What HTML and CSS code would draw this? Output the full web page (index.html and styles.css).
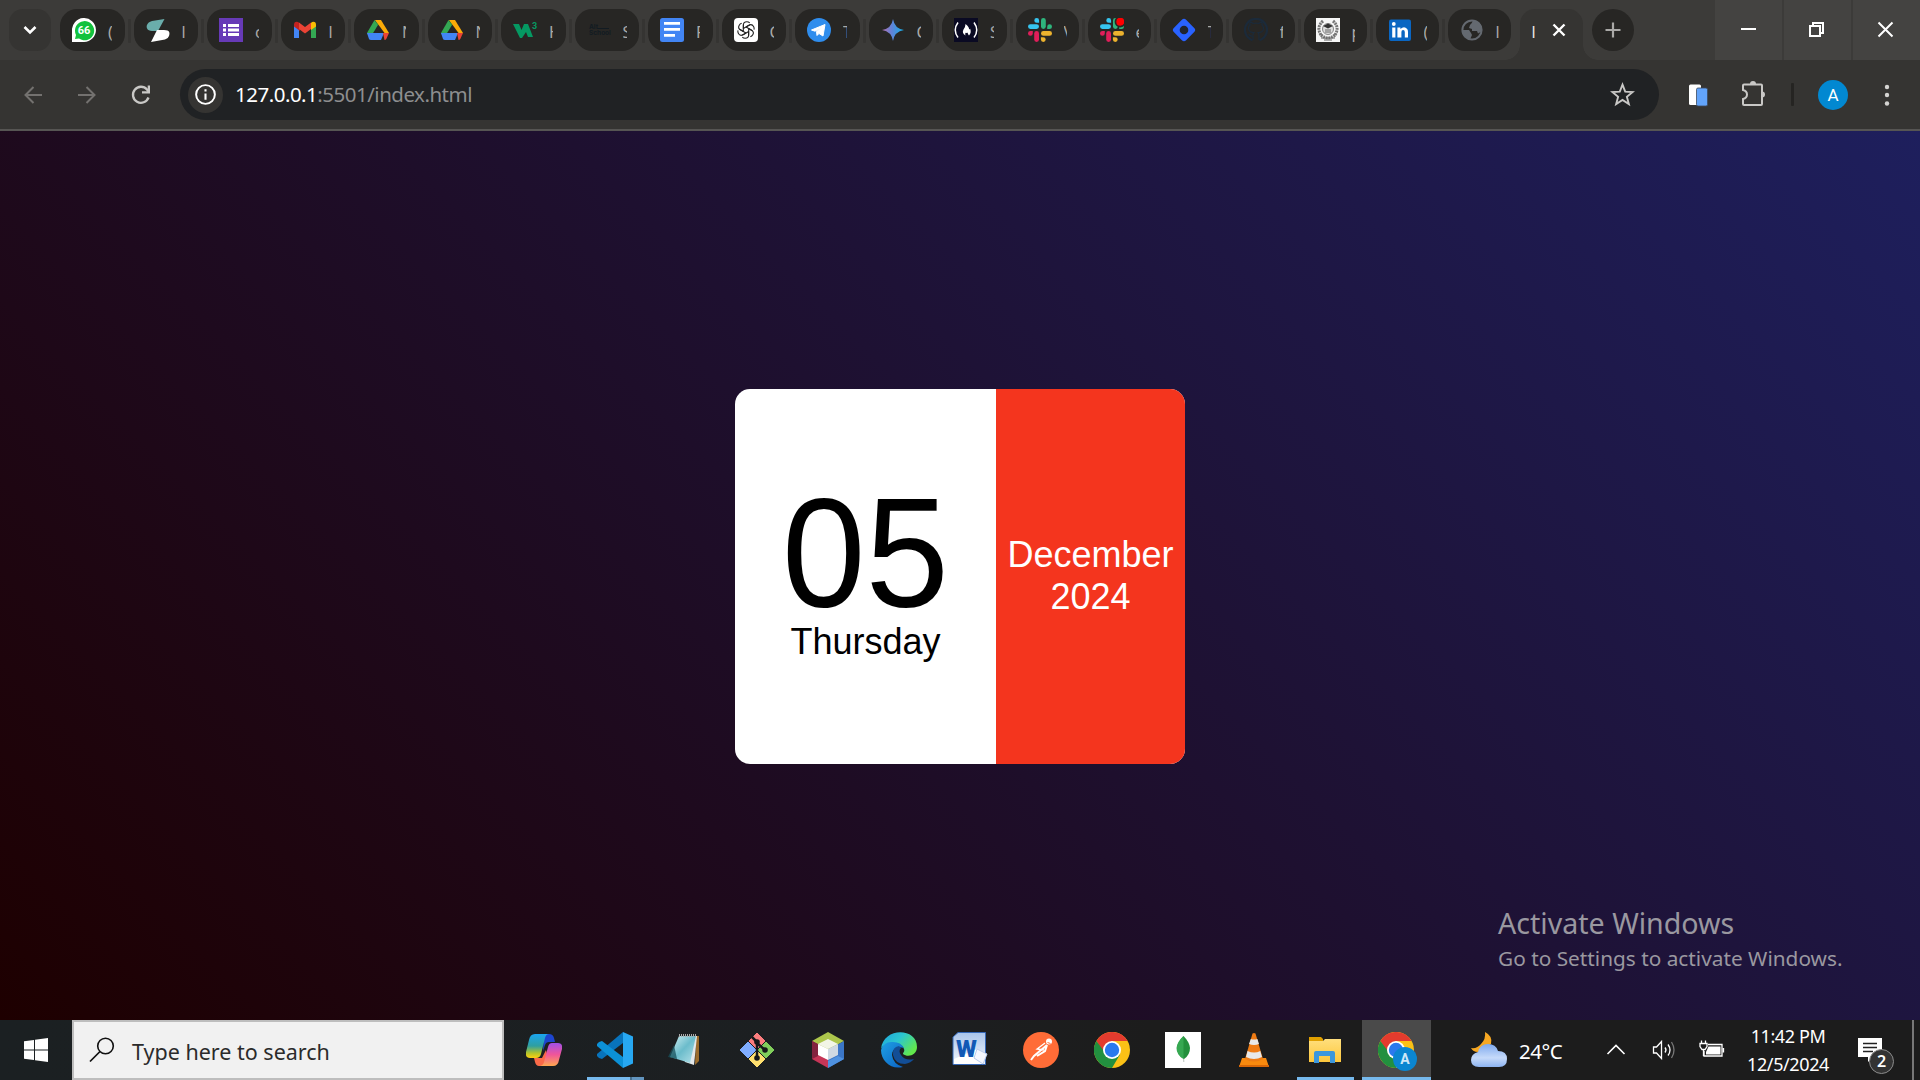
FILE: index.html
```html
<!DOCTYPE html>
<html lang="en">
<head>
<meta charset="utf-8">
<title>Mini Calendar</title>
<link rel="stylesheet" href="styles.css">
</head>
<body>
<svg class="defs" width="0" height="0">
  <defs>
    <linearGradient id="gem" x1="0" y1="0" x2="1" y2="0"><stop offset="0" stop-color="#b56fb0"/><stop offset=".45" stop-color="#5f83d8"/><stop offset="1" stop-color="#12b0e8"/></linearGradient>
    <linearGradient id="cop1" x1="0" y1="0" x2="0" y2="1"><stop offset="0" stop-color="#1aa5f0"/><stop offset=".5" stop-color="#2f9fa0"/><stop offset=".8" stop-color="#b5c42a"/><stop offset="1" stop-color="#ffcf10"/></linearGradient>
    <linearGradient id="cop2" x1="0" y1="0" x2="0" y2="1"><stop offset="0" stop-color="#a050e8"/><stop offset=".5" stop-color="#f0559a"/><stop offset="1" stop-color="#ffa850"/></linearGradient>
    <linearGradient id="edge1" x1="0" y1="0" x2="1" y2=".6"><stop offset="0" stop-color="#1ba3e0"/><stop offset=".5" stop-color="#2cc6cf"/><stop offset="1" stop-color="#62e84c"/></linearGradient>
    <linearGradient id="edge2" x1="0" y1="0" x2="1" y2="1"><stop offset="0" stop-color="#1fa0e4"/><stop offset="1" stop-color="#0a62c4"/></linearGradient>
    <linearGradient id="note" x1="0" y1="0" x2="1" y2="1"><stop offset="0" stop-color="#d5f1f4"/><stop offset=".5" stop-color="#6bbccb"/><stop offset="1" stop-color="#b7e2ea"/></linearGradient>
    <linearGradient id="word" x1="0" y1="0" x2="0" y2="1"><stop offset="0" stop-color="#a9c4ea"/><stop offset="1" stop-color="#f3f7fd"/></linearGradient>
    <linearGradient id="cloud" x1="0" y1="0" x2="0" y2="1"><stop offset="0" stop-color="#7ea9ee"/><stop offset=".6" stop-color="#c6dafa"/><stop offset="1" stop-color="#8db4f2"/></linearGradient>
    <linearGradient id="folder" x1="0" y1="0" x2="0" y2="1"><stop offset="0" stop-color="#ffdf7d"/><stop offset="1" stop-color="#fdc73c"/></linearGradient>
    <symbol id="drive" viewBox="0 0 24 24">
      <path d="M9 2h6l-3 5.500z" fill="#188038"/><path d="M8.500 2 1 15l3 5 8-13z" fill="#34a853"/><path d="M15 2H9l9.500 13H23z" fill="#fbab08"/><path d="M1 15h17l-3 7H5q-1.500 0-2-1z" fill="#4285f4"/><path d="M17 15h6l-2.500 5.500q-.7 1.500-2 1.500z" fill="#ea4335"/><path d="M12 8.500 8.200 15h7.600z" fill="#272624"/>
    </symbol>
    <symbol id="slack" viewBox="0 0 24 24">
      <g fill="#36c5f0"><rect y="6.200" width="11" height="4.800" rx="2.400"/><path d="M8.700 0a2.400 2.400 0 0 1 2.400 2.400v2.400H8.700a2.400 2.400 0 0 1 0-4.800z"/></g>
      <g fill="#2eb67d"><rect x="13" width="4.800" height="11" rx="2.400"/><path d="M24 8.700a2.400 2.400 0 0 1-2.400 2.300h-2.400V8.700a2.400 2.400 0 0 1 4.800 0z"/></g>
      <g fill="#ecb22e"><rect x="13" y="13" width="11" height="4.800" rx="2.400"/><path d="M15.300 24a2.400 2.400 0 0 1-2.400-2.400v-2.400h2.400a2.400 2.400 0 0 1 0 4.800z"/></g>
      <g fill="#e01e5a"><rect x="6.200" y="13" width="4.800" height="11" rx="2.400"/><path d="M0 15.300A2.400 2.400 0 0 1 2.400 13h2.400v2.400a2.400 2.400 0 0 1-4.800 0z"/></g>
    </symbol>
    <symbol id="chrome" viewBox="0 0 36 36">
      <circle cx="18" cy="18" r="18" fill="#fbc116"/>
      <path d="M2.400 9A18 18 0 0 1 33.600 9H18L9 20z" fill="#e33b2e"/>
      <path d="M2.400 9A18 18 0 0 0 18 36l8-13.500-12 2z" fill="#22903f"/>
      <circle cx="18" cy="18" r="9" fill="#fff"/><circle cx="18" cy="18" r="7.200" fill="#2a79ee"/>
    </symbol>
  </defs>
</svg>

<header class="titlebar">
  <button class="tab-search"><svg viewBox="0 0 42 42"><path d="M15.500 18l5.500 5.500 5.500-5.500" fill="none" stroke="#fff" stroke-width="2.600"/></svg></button>
  <nav class="tabs">
    <div class="tab"><svg viewBox="0 0 24 24"><path d="M0 24V13A12 12 0 1 1 12 24z" fill="#fff"/><path d="M3 21l1-4a9.600 9.600 0 1 1 3 3.500z" fill="#12c23e"/><text x="12" y="16" class="badge-num">66</text></svg><span>(</span></div>
    <div class="tab"><svg viewBox="0 0 24 24"><path d="M18.500 1 12 13H6C1 13 0 9 1 7q1-3 5-4z" fill="#6aadab"/><path d="M5 24 11 12h7c6 0 6 3 5 6q-1 3-4 3.500z" fill="#fff"/></svg><span>l</span></div>
    <div class="tab"><svg viewBox="0 0 24 24"><path d="M0 0h24v24H0z" fill="#673ab7"/><path d="M4 6h3v3H4zm5 0h11v3H9zm-5 4.500h3v3H4zm5 0h11v3H9zM4 15h3v3H4zm5 0h11v3H9z" fill="#fff"/></svg><span>c</span></div>
    <div class="tab"><svg viewBox="0 0 24 24"><path d="M1 6v14h5V10z" fill="#4285f4"/><path d="M18 10v10h5V6z" fill="#34a853"/><path d="M1 7q0-4 4-3l2 1.500V13L1 8.500z" fill="#c5221f"/><path d="M18 5l1-1q4-1 4 3v1.500L18 12z" fill="#fbbc04"/><path d="M6 4.500 12 9l6-4.500V11l-6 4.500L6 11z" fill="#ea4335"/></svg><span>l</span></div>
    <div class="tab"><svg><use href="#drive"/></svg><span>N</span></div>
    <div class="tab"><svg><use href="#drive"/></svg><span>N</span></div>
    <div class="tab"><svg viewBox="0 0 24 24"><path d="M0 6h6l2.500 6L11 6h4l5 13h-5l-2-5-4 6H7z" fill="#059862"/><text x="19" y="11" class="w3-num">3</text></svg><span>H</span></div>
    <div class="tab"><svg viewBox="0 0 24 24"><text x="2" y="11" class="alt-text">Alt</text><text x="2" y="17" class="alt-text">School</text><path d="M11 10.500h11" stroke="#121b22"/></svg><span>S</span></div>
    <div class="tab"><svg viewBox="0 0 24 24"><rect width="24" height="24" rx="2.500" fill="#4285f4"/><path d="M4 4h16v2.700H4zm0 6h16v2.700H4zm0 6h11v2.700H4z" fill="#fff"/></svg><span>F</span></div>
    <div class="tab"><svg viewBox="0 0 24 24"><rect width="24" height="24" rx="4" fill="#fff"/><g fill="none" stroke="#222" stroke-width="1.100"><g id="petal"><path d="M9.300 13.500V7.500Q9.300 3.700 12.800 3.700q1.800 0 2.900 1.200M11.900 9.100l4-2.300"/></g><use href="#petal" transform="rotate(60 12 12)"/><use href="#petal" transform="rotate(120 12 12)"/><use href="#petal" transform="rotate(180 12 12)"/><use href="#petal" transform="rotate(240 12 12)"/><use href="#petal" transform="rotate(300 12 12)"/></g></svg><span>C</span></div>
    <div class="tab"><svg viewBox="0 0 24 24"><circle cx="12" cy="12" r="12" fill="#2f8ded"/><path d="M4.500 12 18 6.500 16 18l-4-2.500-2 2-.5-4 5-4-6.500 3.700z" fill="#fff" stroke="#fff"/></svg><span>T</span></div>
    <div class="tab"><svg viewBox="0 0 24 24"><path d="M12 1q1.500 9.500 11 11-9.500 1.500-11 11-1.500-9.500-11-11 9.500-1.500 11-11z" fill="url(#gem)"/></svg><span>C</span></div>
    <div class="tab"><svg viewBox="0 0 24 24"><path d="M0 0h24v24H0z" fill="#0a0a23"/><path d="M4 4.500q-5.500 7.500 0 15M20 4.500q5.500 7.500 0 15" fill="none" stroke="#fff" stroke-width="1.500"/><path d="M11.500 6q4 3 3.500 5.500l1.200-.8q1.500 4-1.200 6.800-1-1-1.500-3-1 1-1.500 0-1.500 1-.5 3-4-2.500-2-6 2-2.500 2-5.500z" fill="#fff"/></svg><span>S</span></div>
    <div class="tab narrow"><svg><use href="#slack"/></svg><span class="tiny">V</span></div>
    <div class="tab narrow"><svg viewBox="0 0 24 24"><use href="#slack" width="24" height="24"/><circle cx="20.300" cy="3.700" r="5.700" fill="#272624"/><circle cx="20.300" cy="3.700" r="4" fill="#f00"/></svg><span class="tiny">e</span></div>
    <div class="tab narrow"><svg viewBox="0 0 24 24"><rect x="3.300" y="3.300" width="17.400" height="17.400" rx="3" transform="rotate(45 12 12)" fill="#2962ff"/><circle cx="12" cy="12" r="4.300" fill="#20242e"/></svg><span class="tiny">T</span></div>
    <div class="tab narrow"><svg viewBox="0 0 24 24"><path d="M9 22v-4q-3.200.6-4.400-2.200M15 22v-4c0-2 0-2.500-1-3.500 7 0 6-6 4-7.500q.5-2-.2-2.800-1.500 0-3 1.300-3-.8-5.600 0-1.500-1.300-3-1.300-.7.800-.2 2.800C4 8.500 3 14.500 10 14.500q-1 1-1 2.500" fill="none" stroke="#1b2a3a" stroke-width="1.200"/><path d="M8.500 22.300a11 11 0 1 1 7 0" fill="none" stroke="#1b2a3a" stroke-width="2.200"/></svg><span class="tiny">f</span></div>
    <div class="tab narrow"><svg viewBox="0 0 24 24"><path d="M0 0h24v24H0z" fill="#f6f6f6"/><path d="M7 3Q0 9 5 17M17 3q7 6 2 14M5 17q7 6 14 0" fill="none" stroke="#777" stroke-width="3" stroke-dasharray="2 .7"/><circle cx="12" cy="11" r="5.500" fill="#ddd" stroke="#888"/><path d="m7 8 5-2.500L17 8l-5 2.500z" fill="#333"/><path d="M9 12h6M9 14h6M5 20h14M8 22h8" stroke="#666"/></svg><span class="tiny">p</span></div>
    <div class="tab narrow"><svg viewBox="0 0 24 24"><rect x="1" y="1.500" width="22" height="21.500" rx="2" fill="#0a66c2"/><path d="M4.200 9.500h3.200v10H4.200zm5.200 0h3V11q3.800-3.500 6.800 0 .8 1 .8 3v5.500h-3.200V14q0-2-1.700-2t-1.700 2v5.500H9.400z" fill="#fff"/><circle cx="5.800" cy="6" r="1.900" fill="#fff"/></svg><span class="tiny">(</span></div>
    <div class="tab narrow"><svg viewBox="0 0 24 24"><circle cx="12" cy="12" r="9.600" fill="none" stroke="#646970" stroke-width="2"/><path d="M13 2.500q-1 3-3 4.500l-1 3 3 1v2h5l1 2.500 3.500-2Q23 6 17 3.500zM2 12h7l2 3 1 2-2 4.500Q2 19 2 12z" fill="#646970"/></svg><span class="tiny">l</span></div>
    <div class="tab active"><span>l</span><svg viewBox="0 0 24 24"><path d="M6.500 6.500l11 11m0-11l-11 11" stroke="#fff" stroke-width="2.400"/></svg></div>
  </nav>
  <button class="new-tab"><svg viewBox="0 0 42 42"><path d="M21 13.500v15M13.500 21h15" stroke="#aaa9a7" stroke-width="2.200"/></svg></button>
  <div class="window-controls">
    <button><svg viewBox="0 0 67 60"><path d="M26 29h15" stroke="#fff" stroke-width="2"/></svg></button>
    <button><svg viewBox="0 0 67 60"><path d="M26 26h10v10H26zM29 26v-3h10v10h-3" fill="none" stroke="#fff" stroke-width="2"/></svg></button>
    <button><svg viewBox="0 0 67 60"><path d="M25.500 22.500l14 14m0-14l-14 14" stroke="#fff" stroke-width="2"/></svg></button>
  </div>
</header>

<div class="toolbar">
  <svg class="nav-icon" viewBox="0 0 24 24"><path d="M21 12H5m7.500-8L4.500 12l8 8" fill="none" stroke="#73716f" stroke-width="2"/></svg>
  <svg class="nav-icon" viewBox="0 0 24 24"><path d="M3 12h16m-7.500-8 8 8-8 8" fill="none" stroke="#73716f" stroke-width="2"/></svg>
  <svg class="nav-icon" viewBox="0 0 24 24"><path d="M19.500 14.500A8 8 0 1 1 18 6.500l1.500 2" fill="none" stroke="#c9c8c6" stroke-width="2.300"/><path d="M21 2.500v8h-8V8.200h5.700V2.500z" fill="#c9c8c6"/></svg>
  <div class="omnibox">
    <span class="site-info"><svg viewBox="0 0 24 24"><circle cx="12" cy="12" r="9" fill="none" stroke="#fff" stroke-width="1.900"/><path d="M12 11v6M12 7v2.200" stroke="#fff" stroke-width="2"/></svg></span>
    <span class="url"><b>127.0.0.1</b>:5501/index.html</span>
    <svg class="star" viewBox="0 0 24 24"><path d="m12 2.500 2.600 6.700 7.200.4-5.600 4.600 1.900 7L12 17.200l-6.100 4 1.900-7-5.600-4.600 7.200-.4z" fill="none" stroke="#c9c8c6" stroke-width="1.800"/></svg>
  </div>
  <svg class="devices" viewBox="0 0 24 24"><rect x="3" y="1.500" width="12" height="20.500" rx="1.500" fill="#fff"/><rect x="10.500" y="5" width="11" height="18" rx="1.500" fill="#62a4fb" stroke="#3c4a60" stroke-width=".8"/></svg>
  <svg class="ext" viewBox="0 0 26 26"><path d="M3 5.500q0-1 1-1h17q1 0 1 1V24q0 1-1 1H4q-1 0-1-1v-5q4-1 4-4.500T3 10z" fill="none" stroke="#c9c8c6" stroke-width="2"/><path d="M10 4a3 3 0 0 1 6 0zM22 11.500a3 3 0 0 1 0 6z" fill="#c9c8c6"/></svg>
  <i class="divider"></i>
  <span class="avatar">A</span>
  <svg class="menu" viewBox="0 0 24 24"><g fill="#d5d4d2"><circle cx="12" cy="4" r="2.200"/><circle cx="12" cy="12" r="2.200"/><circle cx="12" cy="20.500" r="2.200"/></g></svg>
</div>

<main class="page">
  <section class="calendar">
    <div class="left"><p class="date">05</p><p class="day">Thursday</p></div>
    <div class="right"><p>December</p><p>2024</p></div>
  </section>
  <aside class="watermark"><p class="wm-title">Activate Windows</p><p>Go to Settings to activate Windows.</p></aside>
</main>

<footer class="taskbar">
  <button class="start"><svg viewBox="0 0 24 24"><path d="M0 3.300 10 2v9.500H0zM11 1.700 24 0v11.500H11zM0 12.500h10V22L0 20.700zM11 12.500h13V24l-13-1.700z" fill="#fff"/></svg></button>
  <div class="search"><svg viewBox="0 0 26 26"><circle cx="16.500" cy="9" r="7.800" fill="none" stroke="#111" stroke-width="1.600"/><path d="M11 14.500 1 24.500" stroke="#111" stroke-width="1.700"/></svg><span>Type here to search</span></div>
  <div class="apps">
    <div class="app"><svg viewBox="0 0 36 36"><path d="M18 2h5q4 0 5 4l1 4h-6q-3 0-4 3l-2 6z" fill="#1d45cf"/><path d="M13 34q-3 0-4-4l-1-4h8l4-8 2 8-3 8z" fill="#fa6a48"/><path d="M9 2h14q-3 0-4 4l-4 16q-1 4-5 4H4q-5 0-4-6l3-12q1-6 6-6z" fill="url(#cop1)"/><path d="M26 11h6q5 0 4 6l-3 11q-1 6-6 6H13q4 0 5-4l4-15q1-4 4-4z" fill="url(#cop2)"/></svg></div>
    <div class="app running split"><svg viewBox="0 0 36 36"><path d="M26 0 26 11 5 27 2 26 0 24V22z" fill="#0873bb"/><path d="M5 9 26 25v11L0 14v-2l2-2z" fill="#0c91d7"/><path d="M26 0l10 4.500v27L26 36z" fill="#27a8f2"/></svg></div>
    <div class="app"><svg class="notepad" viewBox="0 0 36 36"><path d="M30 4h3v25l-4 4z" fill="#9b6c2c"/><path d="M13 4h18l-3 29-9-3z" fill="#e4e8ea"/><path d="M13 4h17l-6 27-20-6z" fill="url(#note)"/><path d="M13 3.500h18" stroke="#aaa" stroke-width="3" stroke-dasharray="1 1"/><path d="M2 25 8 13l3 14z" fill="#17525c" opacity=".75"/></svg></div>
    <div class="app"><svg viewBox="0 0 36 36"><g stroke="#1c2022"><path d="m18 0 9 9-9 9-9-9z" fill="#fc7d7e"/><path d="m27 9 9 9-9 9-9-9z" fill="#81cf5b"/><path d="m9 9 9 9-9 9-9-9z" fill="#80adff"/><path d="m18 18 9 9-9 9-9-9z" fill="#ffe06f"/></g><path d="m13 5 5 5v16M18 11l8 7" fill="none" stroke="#17191a" stroke-width="2.500"/><g fill="#17191a"><circle cx="18" cy="10" r="2.800"/><circle cx="26" cy="18" r="2.800"/><circle cx="18" cy="26" r="2.800"/></g></svg></div>
    <div class="app"><svg viewBox="0 0 36 36"><path d="m18 0 16 9-16 9L2 9z" fill="#adc74c"/><path d="m2 9 16 9v18L2 27z" fill="#c63557"/><path d="M34 9 18 18v18l16-9z" fill="#3b76c7"/><path d="M2 9 8 12v12l-6 3z" fill="#83233f"/><path d="M18 29l10-5 6 3-16 9z" fill="#4e91e0"/><path d="m18 7 10 5-10 5-10-5z" fill="#f2f5e6"/><path d="m8 12 10 5v11L8 23z" fill="#fff"/><path d="m28 12-10 5v11l10-5z" fill="#cfd9e3"/></svg></div>
    <div class="app"><svg viewBox="0 0 36 36"><path d="M0 17C2-5 36-5 36 15c0 8-9 11-14 7 0-2 2-2 1-5-3-9-20-7-23 0z" fill="url(#edge1)"/><path d="M0 18q3-9 12-8 8 0 11 6-11-3-12 7 1 9 11 12C10 38 0 29 0 18z" fill="url(#edge2)"/><path d="M18 14q-7 1-6 9 2 9 12 9 6-1 9-5-9 2-13-4-3-4 0-7z" fill="#124e96"/></svg></div>
    <div class="app"><svg viewBox="0 0 36 36"><path d="M6 .500h27.500v32H1V5z" fill="url(#word)" stroke="#3568b8"/><path d="M2 27 25 17l10 5-5 10H2z" fill="#fff"/><text x="4" y="25" class="word-w">W</text><path d="m25 17 10 5-4 10-9-6z" fill="#f5f8ff" stroke="#b9cced"/></svg></div>
    <div class="app"><svg viewBox="0 0 36 36"><circle cx="18" cy="18" r="18" fill="#ff6c37"/><circle cx="26" cy="9.500" r="3" fill="#fff"/><path d="M24 13 11 24l-3 4M24 13l-2 6-8 5" fill="none" stroke="#fff" stroke-width="2"/><path d="M22 11 14 17l7 1" fill="none" stroke="#fff" stroke-width="1.300"/><path d="m24.500 10.500 3 1" stroke="#ff6c37"/></svg></div>
    <div class="app"><svg><use href="#chrome"/></svg></div>
    <div class="app"><svg viewBox="0 0 36 36"><path d="M0 0h36v36H0z" fill="#fff"/><path d="M18 24h1l.3 6h-1z" fill="#b9c4bd"/><path d="M18.500 4q6 6 6.500 12 0 7-6 11-7-4-7-11 .5-6 6.500-12z" fill="#23903c"/><path d="M18.500 4v23q-7-4-7-11 .5-6 7-12z" fill="#36a851"/></svg></div>
    <div class="app"><svg viewBox="0 0 36 36"><path d="M6 26h24l3 9H3z" fill="#f98a0e"/><path d="M3 33h30v2H3z" fill="#d96707"/><path d="M16.500 1.500q1.500-1 3 0L27 27q-9 5-18 0z" fill="#ee7b14"/><path d="m14.800 7-1.800 5q5 2 10 0l-1.600-5q-3 1-6.600 0zM11.500 19 10 25q8 4 16 0l-1.700-6q-6 3-12.800 0z" fill="#e8e8e8"/></svg></div>
    <div class="app running"><svg viewBox="0 0 36 36"><path d="M2 5h12l2 2v5H2z" fill="#e0a000"/><path d="M2 9h14l2-2h16v23H2z" fill="url(#folder)"/><path d="M7 31V21q0-2 2-2h17q2 0 2 2v10h-5v-7H12v7z" fill="#3c97dc"/></svg></div>
    <div class="app running current"><svg viewBox="0 0 40 40"><use href="#chrome" width="36" height="36"/><circle cx="27" cy="27" r="12" fill="#0b86d1"/><text x="27" y="32" class="badge-a">A</text></svg></div>
  </div>
  <div class="weather"><svg viewBox="0 0 36 36"><path d="M14 0q8 4 6 12L7 20q-5 0-7-4 6 1 10-4 5-5 4-12z" fill="#f7a823"/><path d="M8 35q-8 0-8-7 0-6 7-8 2-8 10-8 8 0 10 7 9 0 9 8 0 8-8 8z" fill="url(#cloud)"/></svg><span>24°C</span></div>
  <div class="tray">
    <svg class="caret" viewBox="0 0 20 20"><path d="m1.500 14 8.500-8.500 8.500 8.500" fill="none" stroke="#fff" stroke-width="1.600"/></svg>
    <svg class="sound" viewBox="0 0 24 20"><path d="M1.500 7h3L9.500 1.500v17L4.500 13h-3z" fill="none" stroke="#fff" stroke-width="1.300"/><path d="M13 7.500q2 2.500 0 5M16 4.500q4 5.500 0 11" fill="none" stroke="#fff" stroke-width="1.300"/><path d="M19.500 2q5 8 0 16" fill="none" stroke="#777" stroke-width="1.300"/></svg>
    <svg class="battery" viewBox="0 0 26 20"><path d="M9 4.500h14v11.500H5V11M24.500 8v4.500" fill="none" stroke="#fff" stroke-width="1.300"/><path d="M9.500 6.500h12v8H7V12z" fill="#fff"/><path d="M2.500 .500v3M6.500 .500v3M1 3.500h7v3l-2 3H3l-2-3zM4.500 9.500V16" fill="none" stroke="#fff" stroke-width="1.300"/></svg>
  </div>
  <div class="clock"><p>11:42 PM</p><p>12/5/2024</p></div>
  <div class="notice"><svg viewBox="0 0 24 24"><path d="M0 0h24v19H15l-5 5v-5H0z" fill="#fff"/><path d="M5 5.500h14M5 9.500h14M5 13.500h10" stroke="#222" stroke-width="1.300"/></svg><span>2</span></div>
  <i class="peek"></i>
</footer>
</body>
</html>
```
FILE: styles.css
```css
* { box-sizing: border-box; }
body { margin: 0; width: 1920px; height: 1080px; overflow: hidden; display: flex; flex-direction: column; font-family: "Noto Sans", "Open Sans", sans-serif; background: #1c1c1c; }
p { margin: 0; }
button { border: 0; padding: 0; background: none; }
svg { display: block; flex: none; }
.defs { position: absolute; }

/* Tab strip */
.titlebar { height: 60px; flex: none; display: flex; align-items: flex-start; background: #3c3b39; padding-left: 9px; }
.tab-search { width: 42px; height: 42px; margin: 9px 9px 0 0; border-radius: 14px; background: #353432; }
.tabs { display: flex; gap: 9px; padding-top: 9px; }
.tab { position: relative; width: 64.5px; height: 42px; flex: none; display: flex; align-items: center; gap: 12px; padding-left: 12px; border-radius: 17px; background: #272624; }
.tab.narrow { width: 63px; }
.tab svg { width: 24px; height: 24px; }
.tab span { width: 4px; height: 24px; overflow: hidden; font-size: 16px; line-height: 28px; color: #aaa9a7; }
.tab span.tiny { width: 3px; }
.tab:not(.active)::after { content: ""; position: absolute; right: -6px; top: 10px; width: 3px; height: 24px; border-radius: 1px; background: #353432; }
.tab:nth-last-child(2)::after { display: none; }
.tab.active { width: 63px; height: 51px; background: #353432; border-radius: 15px 15px 0 0; padding: 0 0 9px 12px; gap: 11px; }
.tab.active span { color: #e8e7e5; }
.tab.active::before, .tab.active::after { content: ""; position: absolute; bottom: 0; width: 15px; height: 15px; }
.tab.active::before { left: -15px; background: radial-gradient(circle at 0 0, transparent 14.5px, #353432 15px); }
.tab.active::after { right: -15px; background: radial-gradient(circle at 100% 0, transparent 14.5px, #353432 15px); }
.new-tab { width: 42px; height: 42px; margin: 9px 0 0 9px; border-radius: 50%; background: #272624; }
.window-controls { margin-left: auto; display: flex; gap: 2px; }
.window-controls button { width: 67px; height: 60px; background: #444341; }
.badge-num { font: 700 11px "Roboto", sans-serif; fill: #fff; text-anchor: middle; }
.w3-num { font: 700 9px "Roboto", sans-serif; fill: #059862; }
.alt-text { font: 700 6.5px "Inter", sans-serif; fill: #121b22; }

/* Address bar */
.toolbar { height: 71px; flex: none; display: flex; align-items: center; background: #353432; border-bottom: 2px solid #565553; padding: 0 20px 0 21px; }
.nav-icon { width: 24px; height: 24px; margin-right: 30px; }
.omnibox { width: 1479px; height: 51px; margin-left: -3px; display: flex; align-items: center; padding: 0 24px 0 8px; border-radius: 26px; background: #202224; }
.site-info { width: 35px; height: 36px; display: grid; place-items: center; border-radius: 50%; background: #353432; }
.site-info svg { width: 25px; height: 25px; }
.url { margin-left: 12px; padding-bottom: 2px; font-size: 20.5px; color: #8d8e8f; letter-spacing: -.5px; }
.url b { font-weight: 400; color: #fff; }
.star { width: 25px; height: 25px; margin-left: auto; }
.devices { width: 24px; height: 24px; margin-left: 27px; }
.ext { width: 26px; height: 26px; margin-left: 30px; margin-top: -3px; }
.divider { width: 3px; height: 23px; margin-left: 25px; border-radius: 1px; background: #252422; }
.avatar { width: 30px; height: 30px; margin-left: 24px; border-radius: 50%; background: #0288d1; color: #fff; font: 17px/30px "Roboto", sans-serif; text-align: center; }
.menu { width: 24px; height: 24px; margin-left: auto; margin-right: 1px; }

/* Page */
.page { position: relative; flex: 1; display: grid; place-items: center; padding-top: 2px; background: linear-gradient(45deg, #1e0000, #1e1f5d); }
.calendar { width: 450px; height: 375px; display: flex; border-radius: 15px; overflow: hidden; background: #fff; font-family: "Liberation Sans", Arial, sans-serif; font-size: 36px; line-height: 42px; text-align: center; }
.left { width: 58%; display: flex; flex-direction: column; align-items: center; justify-content: center; color: #000; }
.date { margin-top: -4px; font-size: 150px; line-height: 135px; transform: scaleY(1.035); }
.day { margin-top: 1px; padding-bottom: 2px; }
.right { width: 42%; display: flex; flex-direction: column; justify-content: center; background: #f4351e; color: #fff; padding-bottom: 1px; }
.watermark { position: absolute; left: 1498px; top: 771px; color: #9a98a0; font-size: 20.8px; line-height: 28px; white-space: nowrap; }
.wm-title { font-size: 28.6px; line-height: 42px; }

/* Taskbar */
.taskbar { height: 60px; flex: none; display: flex; background: linear-gradient(90deg, #1b2022, #1c1f21 45%, #1c1c1c 60%); color: #fff; }
.start { width: 72px; display: grid; place-items: center; }
.start svg { width: 24px; height: 24px; }
.search { width: 432px; height: 60px; display: flex; align-items: center; gap: 17px; padding-left: 15px; background: #f1f1f1; border: 2px solid #bdbdbd; color: #2b2b2b; font-size: 21.5px; }
.search svg { width: 26px; height: 26px; }
.search span { padding-top: 3px; }
.apps { display: flex; margin-left: 4px; }
.app { position: relative; width: 71px; height: 60px; display: grid; place-items: center; }
.app svg { width: 36px; height: 36px; }
.app .notepad { margin-right: 4px; }
.app.running::after { content: ""; position: absolute; left: 8px; bottom: 0; width: 57px; height: 3px; background: #76b9ed; }
.app.split::after { background: linear-gradient(90deg, #76b9ed 43px, #47708f 43px, #47708f 45px, #6295bf 45px); }
.app.current { width: 69px; margin-left: 2px; background: #4a4a4a; }
.app.current::after { left: 0; width: 69px; }
.app.current svg { width: 40px; height: 40px; margin: 3px 0 0 3px; }
.word-w { font: 900 24px "Roboto", sans-serif; fill: #1259b5; }
.badge-a { font: 700 14px "Roboto", sans-serif; fill: #cfe8f8; text-anchor: middle; }
.weather { display: flex; align-items: center; gap: 12px; margin-left: 40px; font-size: 20.5px; width: 135px; }
.weather svg { width: 36px; height: 36px; }
.weather span { padding-top: 2px; letter-spacing: -.5px; }
.tray { display: flex; align-items: center; }
.caret { width: 20px; height: 20px; }
.sound { width: 24px; height: 20px; margin-left: 26px; }
.battery { width: 26px; height: 20px; margin-left: 23px; }
.clock { width: 120px; margin-left: 3px; padding-top: 2px; text-align: center; font-size: 18px; line-height: 28px; letter-spacing: -.4px; }
.notice { position: relative; width: 24px; margin-left: 10px; padding-top: 18px; }
.notice svg { width: 24px; height: 24px; }
.notice span { position: absolute; left: 11px; top: 29px; width: 25px; height: 25px; border: 1.5px solid #8c8c8c; border-radius: 50%; background: #333; font-weight: 600; font-size: 16px; line-height: 22px; text-align: center; }
.peek { width: 2px; margin-left: auto; margin-right: 6px; background: #777; }
```
